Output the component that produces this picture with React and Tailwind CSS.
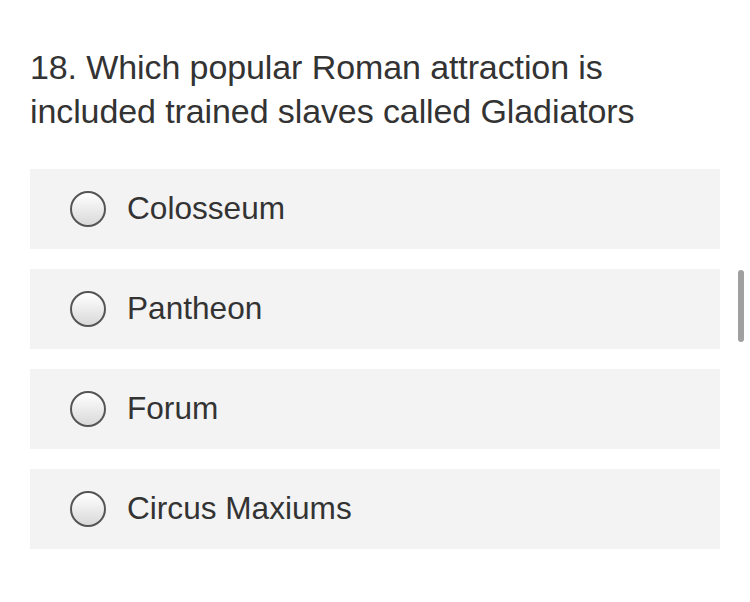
const options = ["Colosseum", "Pantheon", "Forum", "Circus Maxiums"];

function Radio() {
  return (
    <span className="block w-9 h-9 shrink-0 rounded-full border-2 border-[#555] bg-gradient-to-b from-white to-[#d9d9d9]" />
  );
}

export default function App() {
  return (
    <div
      className="relative w-[750px] h-[602px] bg-white text-[#333] px-[30px] pt-[45px]"
      style={{ fontFamily: '"Liberation Sans", Arial, sans-serif' }}
    >
      <p className="text-[34px] leading-[44px] w-[660px] tracking-[-0.1px]">
        18. Which popular Roman attraction is included trained slaves called Gladiators
      </p>
      <div className="mt-[36px] flex flex-col gap-5">
        {options.map((opt) => (
          <div
            key={opt}
            className="h-20 bg-[#f3f3f3] flex items-center pl-10 gap-[21px]"
          >
            <Radio />
            <span className="text-[31.6px] leading-none">{opt}</span>
          </div>
        ))}
      </div>
      <div className="absolute left-[738px] top-[270px] w-[6px] h-[72px] rounded-full bg-[#a0a0a0]" />
    </div>
  );
}
